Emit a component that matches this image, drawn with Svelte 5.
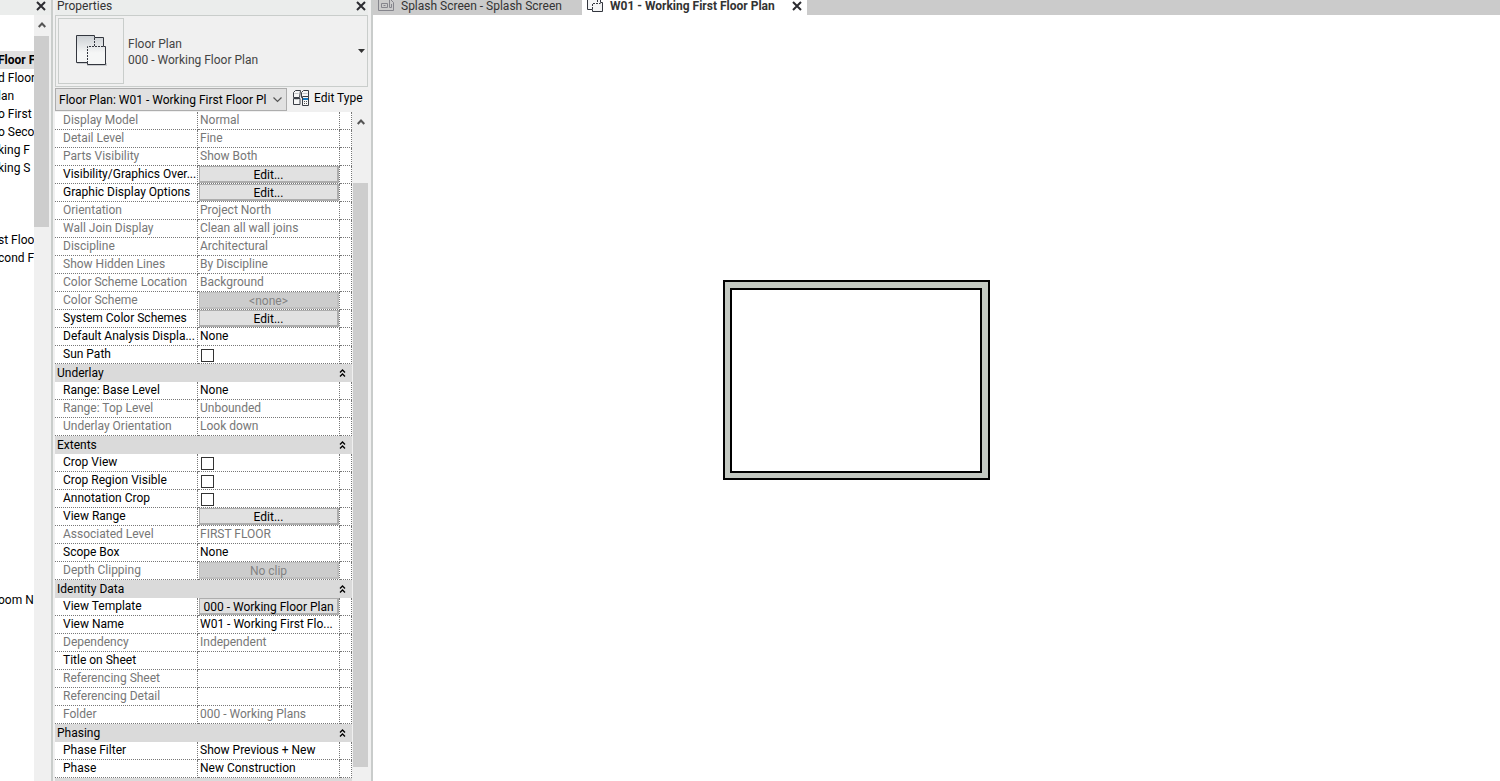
<script>
  const treeRows = Array(43).fill('');
  treeRows[2] = 'Floor F';
  treeRows[3] = 'd Floor';
  treeRows[4] = 'lan';
  treeRows[5] = 'o First';
  treeRows[6] = 'o Seco';
  treeRows[7] = 'king F';
  treeRows[8] = 'king S';
  treeRows[12] = 'st Floo';
  treeRows[13] = 'cond F';
  treeRows[32] = 'oom N';

  // kind: text | button | check; off marks a read-only property
  const text = (name, value = '') => ({ name, value, kind: 'text', off: false });
  const locked = (name, value = '') => ({ name, value, kind: 'text', off: true });
  const button = (name, value = 'Edit...') => ({ name, value, kind: 'button', off: false });
  const lockedButton = (name, value) => ({ name, value, kind: 'button', off: true });
  const check = (name) => ({ name, value: '', kind: 'check', off: false });

  const groups = [
    {
      title: '',
      rows: [
        locked('Display Model', 'Normal'),
        locked('Detail Level', 'Fine'),
        locked('Parts Visibility', 'Show Both'),
        button('Visibility/Graphics Over...'),
        button('Graphic Display Options'),
        locked('Orientation', 'Project North'),
        locked('Wall Join Display', 'Clean all wall joins'),
        locked('Discipline', 'Architectural'),
        locked('Show Hidden Lines', 'By Discipline'),
        locked('Color Scheme Location', 'Background'),
        lockedButton('Color Scheme', '<none>'),
        button('System Color Schemes'),
        text('Default Analysis Displa...', 'None'),
        check('Sun Path')
      ]
    },
    {
      title: 'Underlay',
      rows: [
        text('Range: Base Level', 'None'),
        locked('Range: Top Level', 'Unbounded'),
        locked('Underlay Orientation', 'Look down')
      ]
    },
    {
      title: 'Extents',
      rows: [
        check('Crop View'),
        check('Crop Region Visible'),
        check('Annotation Crop'),
        button('View Range'),
        locked('Associated Level', 'FIRST FLOOR'),
        text('Scope Box', 'None'),
        lockedButton('Depth Clipping', 'No clip')
      ]
    },
    {
      title: 'Identity Data',
      rows: [
        button('View Template', '000 - Working Floor Plan'),
        text('View Name', 'W01 - Working First Flo...'),
        locked('Dependency', 'Independent'),
        text('Title on Sheet'),
        locked('Referencing Sheet'),
        locked('Referencing Detail'),
        locked('Folder', '000 - Working Plans')
      ]
    },
    {
      title: 'Phasing',
      rows: [
        text('Phase Filter', 'Show Previous + New'),
        text('Phase', 'New Construction')
      ]
    }
  ];
</script>

{#snippet cross()}
  <svg width="10" height="10" viewBox="0 0 10 10" aria-hidden="true">
    <path d="M1 1l8 8M9 1l-8 8" fill="none" stroke="#2b2b30" stroke-width="2" />
  </svg>
{/snippet}

{#snippet up()}
  <svg width="8" height="6" viewBox="0 0 8 6" aria-hidden="true">
    <path d="M.7 5L4 1.5 7.3 5" fill="none" stroke="#555" stroke-width="2" />
  </svg>
{/snippet}

<div class="app">
  <aside class="browser">
    <header class="bar"><button class="icon" aria-label="Close browser">{@render cross()}</button></header>
    <div class="body">
      <ul class="tree">
        {#each treeRows as row, i}
          <li class:current={i === 2}>{row}</li>
        {/each}
      </ul>
      <div class="scroll">
        <button class="icon arrow" aria-label="Scroll up">{@render up()}</button>
        <div class="thumb short"></div>
      </div>
    </div>
  </aside>

  <section class="properties">
    <header class="bar">
      <h2>Properties</h2>
      <button class="icon" aria-label="Close properties">{@render cross()}</button>
    </header>

    <div class="type">
      <div class="preview">
        <svg width="32" height="34" viewBox="0 0 32 34" aria-hidden="true">
          <defs>
            <linearGradient id="face" x1="0" y1="0" x2="0" y2="1">
              <stop offset="0" stop-color="#ccd0d4" />
              <stop offset=".6" stop-color="#f5f6f6" />
            </linearGradient>
          </defs>
          <path d="M2 29h11v2h18v-2" fill="none" stroke="#c9cbce" stroke-width="2" />
          <path d="M1.500 1.500h18v2h9v9h2v18h-18v-2h-11z" fill="url(#face)" />
          <path d="M12.500 28.500h-11v-27h18v2h9v9M30.500 12.500v18h-18v-2M28.500 12.500h2" fill="none" stroke="#33363e" />
          <path d="M19.500 4v8.500M28 12.500h-15.500v16" fill="none" stroke="#33363e" stroke-dasharray="2 1" />
        </svg>
      </div>
      <div class="names"><span>Floor Plan</span><span>000 - Working Floor Plan</span></div>
      <button class="icon" aria-label="Choose type">
        <svg width="7" height="4" viewBox="0 0 7 4" aria-hidden="true"><path d="M0 0h7L3.500 4z" fill="#333" /></svg>
      </button>
    </div>

    <div class="picker">
      <div class="combo">
        <select aria-label="Element">
          <option>Floor Plan: W01 - Working First Floor Pl</option>
        </select>
        <svg width="9" height="6" viewBox="0 0 9 6" aria-hidden="true">
          <path d="M.5.500l4 4 4-4" fill="none" stroke="#555" stroke-width="1.200" />
        </svg>
      </div>
      <button class="edit-type">
        <svg width="17" height="17" viewBox="0 0 17 17" aria-hidden="true">
          <g fill="#f7f7f7" stroke="#3a3e46">
            <path d="M.5 7.500v-5l2-2h5l-1 7zM8.500 7.500v-5l2-2h5v7z" />
            <path d="M.5 14.500v-6h6.500v6z" />
            <path d="M9.500 6.500h6v9h-6z" />
          </g>
          <path d="M1.500 3.500h4M9.500 3.500h5M1.500 9.500h4" fill="none" stroke="#c4c7ca" />
          <path d="M10 8h5v2h-5z" fill="#1677c0" />
          <path d="M11 11h1v1h-1zM13 11h1v1h-1zM11 13h1v1h-1zM13 13h1v1h-1z" fill="#555" />
        </svg>
        Edit Type
      </button>
    </div>

    <div class="body">
      <div class="grid">
        <table>
          <colgroup><col class="c-name" /><col class="c-value" /><col class="c-more" /></colgroup>
          {#each groups as group, g}
            <tbody>
              {#if group.title}
                <tr class="group">
                  <th colspan="3">
                    <div>
                      {group.title}
                      <button class="icon" aria-label={`Collapse ${group.title}`}>
                        <svg width="7" height="8" viewBox="0 0 7 8" aria-hidden="true">
                          <path d="M1 3.500L3.500 1 6 3.500M1 7.500L3.500 5 6 7.500" fill="none" stroke="#000" stroke-width="1.300" />
                        </svg>
                      </button>
                    </div>
                  </th>
                </tr>
              {/if}
              {#each group.rows as row, r}
                <tr class:off={row.off}>
                  <td>
                    {#if row.kind === 'check'}
                      <label for={`p-${g}-${r}`}>{row.name}</label>
                    {:else}
                      {row.name}
                    {/if}
                  </td>
                  <td class={row.kind}>
                    {#if row.kind === 'check'}
                      <input type="checkbox" id={`p-${g}-${r}`} />
                    {:else if row.kind === 'button'}
                      <button disabled={row.off}>{row.value}</button>
                    {:else}
                      {row.value}
                    {/if}
                  </td>
                  <td></td>
                </tr>
              {/each}
            </tbody>
          {/each}
          <tbody><tr class="group"><th colspan="3"></th></tr></tbody>
        </table>
      </div>
      <div class="scroll">
        <button class="icon arrow" aria-label="Scroll properties up">{@render up()}</button>
        <div class="thumb long"></div>
      </div>
    </div>
  </section>

  <main>
    <nav>
      <button class="tab first">
        <svg width="17" height="12" viewBox="0 0 17 12" aria-hidden="true">
          <path d="M.5 0v10.500h15V2.500L13 0M3.500 3.500v4h6v-4zM5.500 5.500h2M11.500 0v7.500h2V4" fill="none" stroke="#85858c" />
        </svg>
        Splash Screen - Splash Screen
      </button>
      <div class="tab active">
        <button>
          <svg width="17" height="12" viewBox="0 0 17 12" aria-hidden="true">
            <path d="M.5 0v9.500h5v2h10V2.500h-2V0" fill="#f3f4f5" stroke="#33363e" />
            <path d="M10.500 0v3M5.500 9V3.500h8" fill="none" stroke="#33363e" stroke-dasharray="2 1" />
          </svg>
          W01 - Working First Floor Plan
        </button>
        <button class="icon" aria-label="Close view">{@render cross()}</button>
      </div>
    </nav>
    <div class="canvas">
      <svg class="walls" width="267" height="200" viewBox="0 0 267 200" role="img" aria-label="Walls">
        <rect x="1" y="1" width="265" height="198" fill="#c3c8c1" stroke="#000" stroke-width="2" />
        <rect x="8" y="9" width="250" height="183" fill="#fff" stroke="#000" stroke-width="2" />
      </svg>
    </div>
  </main>
</div>

<style>
  :global(body) { margin: 0; }
  .app {
    display: flex;
    height: 100vh;
    overflow: hidden;
    background: #fff;
    color: #000;
    font: 12px/16px Roboto, "Noto Sans", sans-serif;
  }
  button {
    margin: 0;
    padding: 0;
    border: 0;
    background: none;
    color: inherit;
    font: inherit;
    white-space: nowrap;
  }
  svg { display: block; flex: none; }
  .icon { display: flex; align-items: center; justify-content: center; flex: none; }
  .browser, .properties {
    box-sizing: border-box;
    display: flex;
    flex-direction: column;
    flex: none;
    background: #f0f0f0;
  }
  .browser { width: 53px; border-right: 2px solid #c9cdcb; }
  .properties { width: 320px; border-right: 2px solid #c9cccb; padding: 0 3px 0 2px; }
  .bar {
    display: flex;
    align-items: center;
    justify-content: flex-end;
    flex: none;
    height: 12px;
    padding: 0 2px 3px;
    background: #ebedec;
    color: #333;
  }
  .browser .bar { padding-right: 5px; }
  h2 { flex: 1; margin: 0; font-size: 12px; font-weight: 400; }
  .body { display: flex; flex: 1; min-height: 0; overflow: hidden; }

  .tree { flex: 1; min-width: 0; margin: 0; padding: 0; list-style: none; overflow: hidden; background: #fff; }
  .tree li { height: 18px; line-height: 18px; white-space: nowrap; text-indent: -2px; }
  .tree .current { background: #e0e0e0; font-weight: 700; }

  .scroll { display: flex; flex-direction: column; flex: none; width: 15px; background: #f0f0f0; }
  .browser .scroll { margin-right: 2px; }
  .arrow { height: 20px; }
  .thumb { background: #cdcdcd; }
  .short { height: 191px; margin-top: 1px; }
  .long { height: 584px; margin-top: 51px; }

  .type {
    display: flex;
    align-items: center;
    flex: none;
    gap: 4px;
    padding: 2px;
    border: 1px solid #c9cdcb;
  }
  .preview {
    display: flex;
    align-items: center;
    justify-content: center;
    width: 64px;
    height: 64px;
    border: 1px solid #c9cdcb;
  }
  .names { display: flex; flex: 1; flex-direction: column; padding-top: 2px; color: #444; }
  .type .icon { width: 7px; height: 16px; }

  .picker { display: flex; flex: none; gap: 6px; height: 23px; padding: 1px 0; }
  .combo { display: grid; align-items: center; width: 232px; }
  .combo > * { grid-area: 1 / 1; }
  .combo svg { justify-self: end; margin-right: 5px; pointer-events: none; }
  select {
    appearance: none;
    box-sizing: border-box;
    width: 100%;
    height: 23px;
    padding: 0 18px 0 3px;
    border: 1px solid #adadad;
    border-radius: 0;
    background: #e1e1e1;
    color: #000;
    font: inherit;
  }
  .edit-type { display: flex; align-items: center; gap: 4px; height: 20px; }

  .grid { flex: 1; min-width: 0; overflow: hidden; background: #fff; margin-right: 1px; }
  table { width: 100%; table-layout: fixed; border-collapse: separate; border-spacing: 0; }
  .c-name { width: 143px; }
  .c-more { width: 12px; }
  td, th {
    box-sizing: border-box;
    height: 18px;
    padding: 0;
    overflow: hidden;
    line-height: 16px;
    text-align: left;
    font-weight: 400;
    white-space: nowrap;
  }
  td { border: dotted #777; border-width: 0 1px 1px 0; line-height: 16px; vertical-align: top; }
  td:first-child { padding-left: 8px; }
  td.text { padding-left: 2px; }
  td.check { padding-left: 3px; }
  .off { color: #777; }
  th { background: #dadada; }
  th div { display: flex; justify-content: space-between; padding: 0 6px 0 2px; }
  td button {
    display: block;
    box-sizing: border-box;
    width: 100%;
    height: 17px;
    padding: 1px 0 0;
    border: 1px solid #adadad;
    border-width: 1px 2px 2px 1px;
    background: #e1e1e1;
    line-height: 14px;
    text-align: center;
  }
  td.button { padding: 0 0 0 1px; }
  td button:disabled { border-color: #bfbfbf; background: #ccc; color: #838383; }
  input {
    appearance: none;
    display: block;
    box-sizing: border-box;
    width: 13px;
    height: 13px;
    margin: 3px 0 0;
    border: 1px solid #333;
    background: #fff;
  }

  main { display: flex; flex: 1; flex-direction: column; min-width: 0; }
  nav { display: flex; flex: none; height: 15px; background: #cbcbcb; color: #333; }
  .tab, .tab button { display: flex; align-items: flex-start; gap: 6px; }
  .tab { height: 15px; overflow: hidden; }
  .tab, .tab button:first-child { line-height: 12px; }
  .first { width: 209px; padding-left: 5px; }
  .active {
    box-sizing: border-box;
    min-width: 225px;
    justify-content: space-between;
    padding: 0 5px;
    background: #fff;
    font-weight: 700;
  }
  .active .icon { height: 12px; align-items: center; }
  .canvas { position: relative; flex: 1; overflow: hidden; background: #fff; }
  .walls { position: absolute; left: 350px; top: 265px; }
</style>
